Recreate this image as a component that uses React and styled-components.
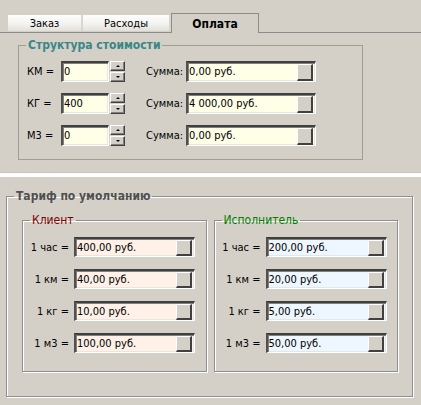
import React from "react";
import styled, { createGlobalStyle } from "styled-components";

const GlobalStyle = createGlobalStyle`
  html, body {
    margin: 0;
    padding: 0;
    background: #d4d0c8;
  }
  body {
    font-family: "DejaVu Sans Condensed", "DejaVu Sans", sans-serif;
    font-stretch: condensed;
    font-size: 11px;
    color: #000;
  }
`;

const Page = styled.div`
  width: 421px;
  height: 405px;
  overflow: hidden;
`;

const TabBar = styled.div`
  display: flex;
  align-items: flex-end;
  height: 32px;
  padding-left: 8px;
  border-bottom: 1px solid #8c8c8c;
`;

const Tab = styled.div`
  box-sizing: border-box;
  display: flex;
  align-items: center;
  justify-content: center;
  width: ${p => p.$width}px;
  height: ${p => (p.$active ? 20 : 16)}px;
  margin-bottom: ${p => (p.$active ? -1 : 1)}px;
  font-size: ${p => (p.$active ? 12 : 11)}px;
  font-weight: ${p => (p.$active ? "bold" : "normal")};
  background: ${p =>
    p.$active ? "#d4d0c8" : "linear-gradient(to bottom, #fdfdfd 0%, #f4f4f2 50%, #e2e0da 100%)"};
  border: ${p => (p.$active ? "1px solid #8c8c8c" : "none")};
  border-bottom: none;
  border-right: ${p => (p.$active ? "1px solid #8c8c8c" : "2px solid #d8d6d0")};
`;

const Group = styled.fieldset`
  box-sizing: border-box;
  margin: ${p => p.$margin};
  padding: 0;
  width: ${p => p.$width}px;
  border: 1px solid ${p => (p.$etched ? "#8e8e8e" : "#a19d8f")};
  box-shadow: ${p => (p.$etched ? "1px 1px 0 #fff, inset 1px 1px 0 #fff" : "none")};
  min-width: 0;
`;

const Legend = styled.legend`
  padding: 0 2px;
  margin-left: 7px;
  line-height: 14px;
  font-size: 12px;
  font-weight: ${p => (p.$bold ? "bold" : "normal")};
  color: ${p => p.$color};
`;

const GroupBody = styled.div`
  padding: ${p => p.$padding};
`;

const Rows = styled.div`
  display: flex;
  flex-direction: column;
  gap: ${p => p.$gap}px;
`;

const Row = styled.div`
  display: flex;
  align-items: center;
  height: ${p => p.$height}px;
`;

const Label = styled.span`
  box-sizing: border-box;
  width: ${p => p.$width}px;
  text-align: ${p => p.$align || "left"};
  padding-right: ${p => p.$pad || 0}px;
  white-space: nowrap;
  flex-shrink: 0;
`;

const Field = styled.div`
  box-sizing: border-box;
  display: flex;
  align-items: center;
  width: ${p => p.$width}px;
  height: ${p => p.$height}px;
  padding: 1px 2px 2px 1px;
  background: ${p => p.$bg};
  border-style: solid;
  border-width: 2px 1px 1px 2px;
  border-color: #404040 #fff #fff #505050;
  box-shadow: inset 0 1px 0 #808080, inset 1px 0 0 #808080, inset -1px -1px 0 #e8e6e0;
  white-space: nowrap;
  flex-shrink: 0;
`;

const Value = styled.span`
  flex: 1;
`;

const DropButton = styled.div`
  box-sizing: border-box;
  width: 16px;
  height: ${p => p.$height}px;
  align-self: flex-start;
  background: #d4d0c8;
  border-style: solid;
  border-width: 1px 2px 2px 1px;
  border-color: #fff #404040 #404040 #fff;
`;

const Spin = styled.div`
  display: flex;
  flex-direction: column;
  gap: 1px;
  margin-left: 1px;
  height: 21px;
`;

const SpinButton = styled.div`
  box-sizing: border-box;
  display: flex;
  align-items: center;
  justify-content: center;
  width: 15px;
  height: 10px;
  background: #d4d0c8;
  border-style: solid;
  border-width: 1px;
  border-color: #fff #404040 #404040 #fff;
  box-shadow: inset -1px -1px 0 #808080;
`;

const Arrow = styled.span`
  width: 0;
  height: 0;
  border-left: 2px solid transparent;
  border-right: 2px solid transparent;
  ${p => (p.$up ? "border-bottom: 2px solid #000;" : "border-top: 2px solid #000;")}
`;

const SumLabel = styled.span`
  margin-left: 21px;
  width: 40px;
  flex-shrink: 0;
`;

const Divider = styled.div`
  height: 4px;
  margin-top: 12px;
  background: #fff;
  border-top: 1px solid #c8c4bc;
`;

const Columns = styled.div`
  display: flex;
  gap: 7px;
`;

const costRows = [
  { label: "КМ =", value: "0", sum: "0,00 руб." },
  { label: "КГ =", value: "400", sum: "4 000,00 руб." },
  { label: "М3 =", value: "0", sum: "0,00 руб." },
];

const client = ["400,00 руб.", "40,00 руб.", "10,00 руб.", "100,00 руб."];
const performer = ["200,00 руб.", "20,00 руб.", "5,00 руб.", "50,00 руб."];
const units = ["1 час =", "1 км =", "1 кг =", "1 м3 ="];

const TariffGroup = ({ title, color, values, bg }) => (
  <Group $width={185} $margin="0" $etched>
    <Legend $color={color}>{title}</Legend>
    <GroupBody $padding="10px 10px 18px 0">
      <Rows $gap={12}>
        {values.map((v, i) => (
          <Row key={units[i]} $height={20}>
            <Label $width={51} $align="right" $pad={5}>{units[i]}</Label>
            <Field $width={121} $height={20} $bg={bg}>
              <Value>{v}</Value>
              <DropButton $height={16} />
            </Field>
          </Row>
        ))}
      </Rows>
    </GroupBody>
  </Group>
);

const App = () => {
  return (
    <Page>
      <GlobalStyle />
      <TabBar>
        <Tab $width={75}>Заказ</Tab>
        <Tab $width={88}>Расходы</Tab>
        <Tab $width={88} $active>Оплата</Tab>
      </TabBar>

      <Group $width={345} $margin="5px 0 0 18px">
        <Legend $bold $color="#3a8686">Структура стоимости</Legend>
        <GroupBody $padding="9px 0 13px 8px">
          <Rows $gap={11}>
            {costRows.map(r => (
              <Row key={r.label} $height={21}>
                <Label $width={34}>{r.label}</Label>
                <Field $width={48} $height={21} $bg="#ffffe8">
                  <Value>{r.value}</Value>
                </Field>
                <Spin>
                  <SpinButton>
                    <Arrow $up />
                  </SpinButton>
                  <SpinButton>
                    <Arrow />
                  </SpinButton>
                </Spin>
                <SumLabel>Сумма:</SumLabel>
                <Field $width={130} $height={21} $bg="#ffffe8">
                  <Value>{r.sum}</Value>
                  <DropButton $height={17} />
                </Field>
              </Row>
            ))}
          </Rows>
        </GroupBody>
      </Group>

      <Divider />

      <Group $width={407} $margin="12px 0 0 6px" $etched>
        <Legend $bold $color="#505050">Тариф по умолчанию</Legend>
        <GroupBody $padding="10px 14px 24px 15px">
          <Columns>
            <TariffGroup title="Клиент" color="#800000" values={client} bg="#fff0e8" />
            <TariffGroup title="Исполнитель" color="#008000" values={performer} bg="#eef6ff" />
          </Columns>
        </GroupBody>
      </Group>
    </Page>
  );
};

export default App;
